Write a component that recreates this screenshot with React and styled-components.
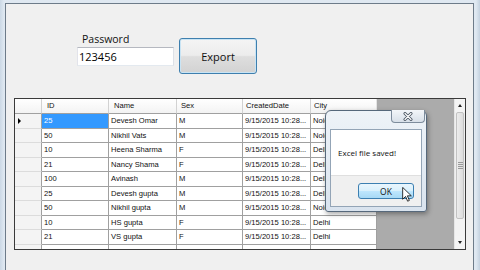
import React from 'react';
import styled, { createGlobalStyle } from 'styled-components';

const Global = createGlobalStyle`
  html, body { margin: 0; padding: 0; }
  body { width: 480px; height: 270px; overflow: hidden; background: #dbe5ef; }
  #root { width: 480px; height: 270px; }
`;

const Frame = styled.div`
  width: 480px;
  height: 270px;
  box-sizing: border-box;
  padding: 3px 6px 0 5px;
  display: flex;
  background: linear-gradient(to right, #cbd8e5 0, #dfe8f1 4px, #dfe8f1 476px, #c3d1df 480px);
`;

const Client = styled.div`
  flex: 1;
  position: relative;
  background: #f0f0f0;
  border: 1px solid #6d7b89;
  border-bottom: none;
  display: flex;
  flex-direction: column;
  overflow: hidden;
`;

const TopBar = styled.div`
  display: flex;
  align-items: flex-start;
  gap: 5px;
  height: 70px;
  box-sizing: border-box;
  padding: 28px 0 0 71px;
`;

const PasswordGroup = styled.div`
  display: flex;
  flex-direction: column;
  width: 97px;
`;

const Label = styled.div`
  font-family: "Open Sans", "Noto Sans", sans-serif;
  font-size: 10.5px;
  line-height: 14px;
  height: 14px;
  padding-left: 5px;
  margin-bottom: 1px;
  color: #111;
`;

const TextBox = styled.div`
  height: 19px;
  box-sizing: border-box;
  border: 1px solid;
  border-color: #b5b8c0 #dde1e7 #e3e9ef #e2e3ea;
  background: #fff;
  font-family: "Open Sans", "Noto Sans", sans-serif;
  font-size: 11px;
  line-height: 17px;
  padding-left: 1px;
  color: #000;
`;

const Button = styled.div`
  width: 78px;
  height: 36px;
  margin-top: 6px;
  box-sizing: border-box;
  border: 1px solid #3e7fae;
  border-radius: 3px;
  box-shadow: inset 0 0 0 1px #c9e4f4;
  background: linear-gradient(#f4f4f4 0%, #ececec 48%, #dedede 52%, #d2d2d2 100%);
  display: flex;
  align-items: center;
  justify-content: center;
  font-family: "Open Sans", "Noto Sans", sans-serif;
  font-size: 11px;
  color: #111;
`;

const GridView = styled.div`
  margin: 24px 0 0 8px;
  width: 452px;
  height: 152px;
  box-sizing: border-box;
  border: 1px solid #3a3a3a;
  display: flex;
  background: #ababab;
`;

const Table = styled.div`
  width: 362px;
  flex: none;
  display: flex;
  flex-direction: column;
  overflow: hidden;
  background: #fff;
`;

const Spacer = styled.div`
  flex: 1;
`;

const Row = styled.div`
  display: grid;
  grid-template-columns: 27px 67px 68px 66px 68px 66px;
  height: ${p => (p.$header ? '15px' : '14.5px')};
  flex: none;
`;

const Cell = styled.div`
  box-sizing: border-box;
  border-right: 1px solid #a0a0a0;
  border-bottom: 1px solid #a0a0a0;
  padding-left: 2px;
  font-family: "Liberation Sans", Arial, sans-serif;
  font-size: 7.6px;
  line-height: 13.5px;
  white-space: nowrap;
  overflow: hidden;
  background: ${p => (p.$selected ? '#3399ff' : '#fff')};
  color: ${p => (p.$selected ? '#fff' : '#111')};
`;

const HeaderCell = styled.div`
  box-sizing: border-box;
  border-right: 1px solid #d2d2d2;
  border-bottom: 1px solid #a0a0a0;
  padding-left: ${p => p.$pad || 4}px;
  font-family: "Liberation Sans", Arial, sans-serif;
  font-size: 7.6px;
  line-height: 14px;
  white-space: nowrap;
  overflow: hidden;
  background: linear-gradient(#ffffff, #f3f3f3);
  color: #111;
  &:last-child { border-right-color: #e4e4e4; }
`;

const RowHead = styled.div`
  box-sizing: border-box;
  border-right: 1px solid #a0a0a0;
  border-bottom: 1px solid #dcdcdc;
  background: #f4f4f4;
  display: flex;
  align-items: center;
  padding-left: 3px;
`;

const Pointer = styled.span`
  width: 0;
  height: 0;
  border-top: 3px solid transparent;
  border-bottom: 3px solid transparent;
  border-left: 3px solid #000;
`;

const ScrollBar = styled.div`
  width: 11px;
  flex: none;
  display: flex;
  flex-direction: column;
  background: #f0f0f0;
  border-left: 1px solid #e6e6e6;
  box-sizing: border-box;
`;

const ArrowBtn = styled.div`
  height: 13px;
  flex: none;
  display: flex;
  align-items: center;
  justify-content: center;
  background: #f4f4f4;
`;

const Arrow = styled.span`
  width: 0;
  height: 0;
  border-left: 2.5px solid transparent;
  border-right: 2.5px solid transparent;
  ${p => (p.$up ? 'border-bottom: 3px solid #222;' : 'border-top: 3px solid #222;')}
`;

const Thumb = styled.div`
  height: 105px;
  flex: none;
  margin: 0 1px;
  border: 1px solid #c2c2c2;
  border-radius: 2px;
  background: linear-gradient(to right, #ececec, #dddddd);
  display: flex;
  flex-direction: column;
  align-items: center;
  justify-content: center;
  gap: 1px;
`;

const Grip = styled.span`
  width: 5px;
  height: 1px;
  background: #9a9a9a;
`;

const Track = styled.div`
  flex: 1;
  background: #f3f3f3;
`;

const Dialog = styled.div`
  position: absolute;
  left: 319px;
  top: 106px;
  width: 102px;
  height: 102px;
  box-sizing: border-box;
  border: 1px solid #56687b;
  border-radius: 6px 6px 3px 3px;
  background: linear-gradient(#eef3f8, #d9e3ee);
  box-shadow: 1px 2px 5px rgba(0, 0, 0, 0.35);
  padding: 18px 4px 4px 4px;
  display: flex;
`;

const CloseBtn = styled.div`
  position: absolute;
  top: -1px;
  right: 1px;
  width: 34px;
  height: 13px;
  box-sizing: border-box;
  border: 1px solid #7d8c9c;
  border-top: none;
  border-radius: 0 0 4px 4px;
  background: linear-gradient(#f3f6f9, #d8e0e9);
  display: flex;
  align-items: center;
  justify-content: center;
`;

const DialogInner = styled.div`
  flex: 1;
  border: 1px solid #93a4b6;
  display: flex;
  flex-direction: column;
  background: #f0f0f0;
`;

const Message = styled.div`
  height: 45px;
  background: #fff;
  display: flex;
  align-items: center;
  padding-left: 7px;
  font-family: "Open Sans", "Noto Sans", sans-serif;
  font-size: 8px;
  color: #111;
`;

const Footer = styled.div`
  flex: 1;
  border-top: 1px solid #dfdfdf;
  display: flex;
  justify-content: flex-end;
  align-items: flex-start;
  padding: 7px 7px 0 0;
`;

const OkButton = styled.div`
  width: 56px;
  height: 16px;
  box-sizing: border-box;
  border: 1px solid #3c7fb1;
  border-radius: 3px;
  background: linear-gradient(#eaf6fd 0%, #d9f0fc 48%, #bee6fd 52%, #a7d9f5 100%);
  display: flex;
  align-items: center;
  justify-content: center;
  font-family: "Open Sans", "Noto Sans", sans-serif;
  font-size: 8.5px;
  color: #111;
`;

const Cursor = styled.svg`
  position: absolute;
  left: 396px;
  top: 183px;
`;

const rows = [
  ['25', 'Devesh Omar', 'M', 'Noida'],
  ['50', 'Nikhil Vats', 'M', 'Noida'],
  ['10', 'Heena Sharma', 'F', 'Delhi'],
  ['21', 'Nancy Shama', 'F', 'Delhi'],
  ['100', 'Avinash', 'M', 'Delhi'],
  ['25', 'Devesh gupta', 'M', 'Delhi'],
  ['50', 'Nikhil gupta', 'M', 'Noida'],
  ['10', 'HS gupta', 'F', 'Delhi'],
  ['21', 'VS gupta', 'F', 'Delhi'],
];

export default function App() {
  return (
    <>
      <Global />
      <Frame>
        <Client>
          <TopBar>
            <PasswordGroup>
              <Label>Password</Label>
              <TextBox>123456</TextBox>
            </PasswordGroup>
            <Button>Export</Button>
          </TopBar>
          <GridView>
            <Table>
              <Row $header>
                <HeaderCell />
                <HeaderCell $pad={5}>ID</HeaderCell>
                <HeaderCell $pad={5}>Name</HeaderCell>
                <HeaderCell>Sex</HeaderCell>
                <HeaderCell $pad={3}>CreatedDate</HeaderCell>
                <HeaderCell $pad={3}>City</HeaderCell>
              </Row>
              {rows.map((r, i) => (
                <Row key={i}>
                  <RowHead>{i === 0 && <Pointer />}</RowHead>
                  <Cell $selected={i === 0}>{r[0]}</Cell>
                  <Cell>{r[1]}</Cell>
                  <Cell>{r[2]}</Cell>
                  <Cell>9/15/2015 10:28...</Cell>
                  <Cell>{r[3]}</Cell>
                </Row>
              ))}
              <Row>
                <RowHead />
                <Cell />
                <Cell />
                <Cell />
                <Cell />
                <Cell />
              </Row>
            </Table>
            <Spacer />
            <ScrollBar>
              <ArrowBtn><Arrow $up /></ArrowBtn>
              <Thumb>
                <Grip />
                <Grip />
                <Grip />
                <Grip />
              </Thumb>
              <Track />
              <ArrowBtn><Arrow /></ArrowBtn>
            </ScrollBar>
          </GridView>
          <Dialog>
            <CloseBtn>
              <svg width="10" height="9" viewBox="0 0 10 9">
                <path d="M2 1.5 L8 7.5 M8 1.5 L2 7.5" stroke="#4a5562" strokeWidth="3" strokeLinecap="round" />
                <path d="M2 1.5 L8 7.5 M8 1.5 L2 7.5" stroke="#ffffff" strokeWidth="1.2" strokeLinecap="round" />
              </svg>
            </CloseBtn>
            <DialogInner>
              <Message>Excel file saved!</Message>
              <Footer>
                <OkButton>OK</OkButton>
              </Footer>
            </DialogInner>
          </Dialog>
          <Cursor width="10" height="15" viewBox="0 0 12 19">
            <path d="M0.5 0.5 L0.5 15.5 L4.2 12 L6.8 18 L9 17 L6.5 11.2 L11.5 11.2 Z" fill="#fff" stroke="#000" strokeWidth="1" strokeLinejoin="miter" />
          </Cursor>
        </Client>
      </Frame>
    </>
  );
}
